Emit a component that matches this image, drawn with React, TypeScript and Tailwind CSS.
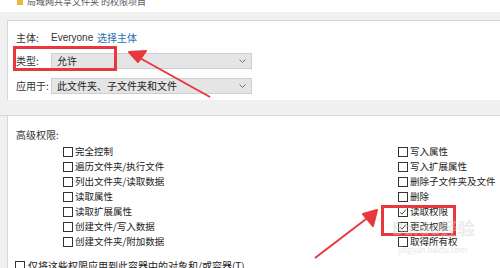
import React from 'react';

const font = { fontFamily: '"Microsoft YaHei", "Noto Sans CJK SC", "Noto Sans", sans-serif' };

const leftPerms = ['完全控制', '遍历文件夹/执行文件', '列出文件夹/读取数据', '读取属性', '读取扩展属性', '创建文件/写入数据', '创建文件夹/附加数据'];
const rightPerms: [string, boolean][] = [
  ['写入属性', false],
  ['写入扩展属性', false],
  ['删除子文件夹及文件', false],
  ['删除', false],
  ['读取权限', true],
  ['更改权限', true],
  ['取得所有权', false],
];

function Box({ checked }: { checked?: boolean }) {
  return (
    <span className="w-[10px] h-[10px] border border-[#333] bg-white flex items-center justify-center shrink-0">
      {checked && (
        <svg width="8" height="8" viewBox="0 0 8 8">
          <path d="M1 4.2 L3 6.2 L7 1.5" stroke="#333" strokeWidth="0.9" fill="none" />
        </svg>
      )}
    </span>
  );
}

function Perm({ label, checked }: { label: string; checked?: boolean }) {
  return (
    <div className="h-[15px] flex items-center gap-[2px]">
      <Box checked={checked} />
      <span className="text-[9.5px] text-[#222] leading-none">{label}</span>
    </div>
  );
}

function Select({ value }: { value: string }) {
  return (
    <div className="w-[201px] h-[16px] bg-[#e5e5e5] border border-[#cfcfcf] flex items-center justify-between px-[5px]">
      <span className="text-[10px] text-[#222] leading-none">{value}</span>
      <svg width="7" height="4" viewBox="0 0 7 4">
        <path d="M0.5 0.5 L3.5 3.5 L6.5 0.5" stroke="#555" strokeWidth="0.8" fill="none" />
      </svg>
    </div>
  );
}

export default function App() {
  return (
    <div className="relative w-[500px] h-[268px] overflow-hidden bg-[#f0f0f0]" style={font}>
      <div className="h-[12px] bg-white flex items-start pl-[17px] gap-[4px] overflow-hidden">
        <span className="w-[6px] h-[6px] bg-[#e8b93a] -mt-[1px]" />
        <span className="text-[9px] leading-none -mt-[3px] text-[#555]">局域网共享文件夹 的权限项目</span>
      </div>
      <div className="h-[8px]" />
      <div className="ml-[7px] h-[80px] bg-white border-t border-l border-[#d6d6d6] flex flex-col">
        <div className="h-[32px] flex items-end pb-[10px] pl-[8px]">
          <span className="w-[35px] text-[10px] text-[#333] leading-none">主体:</span>
          <span className="w-[46px] text-[10px] text-[#333] leading-none" style={{ fontFamily: '"Segoe UI", "Liberation Sans", "Noto Sans CJK SC", sans-serif' }}>Everyone</span>
          <span className="text-[10px] text-[#1f6fb5] leading-none">选择主体</span>
        </div>
        <div className="h-[16px] flex items-center pl-[8px]">
          <span className="w-[35px] text-[10px] text-[#333] leading-none">类型:</span>
          <Select value="允许" />
        </div>
        <div className="h-[9px]" />
        <div className="h-[16px] flex items-center pl-[8px]">
          <span className="w-[35px] text-[10px] text-[#333] leading-none">应用于:</span>
          <Select value="此文件夹、子文件夹和文件" />
        </div>
      </div>
      <div className="h-[16px] border-b border-[#d6d6d6]" />
      <div className="ml-[7px] h-[160px] bg-white border-l border-[#d6d6d6] pl-[8px]">
        <div className="h-[24px] flex items-end">
          <span className="text-[10px] text-[#333] leading-none">高级权限:</span>
        </div>
        <div className="flex mt-[4px]">
          <div className="w-[382px] pl-[47px] flex flex-col">
            {leftPerms.map((p) => (
              <Perm key={p} label={p} />
            ))}
          </div>
          <div className="flex flex-col">
            {rightPerms.map(([p, c]) => (
              <Perm key={p} label={p} checked={c} />
            ))}
          </div>
        </div>
        <div className="mt-[12px] -ml-[1px] flex items-center gap-[3px]">
          <Box />
          <span className="text-[10px] text-[#222] leading-none">仅将这些权限应用到此容器中的对象和/或容器(T)</span>
        </div>
      </div>

      {/* annotations */}
      <div className="absolute left-[13px] top-[46px] w-[104px] h-[25px] border-[3px] border-[#e8383d]" />
      <div className="absolute left-[381px] top-[205px] w-[75px] h-[31px] border-[3px] border-[#e8383d]" />
      <div className="absolute left-[392px] top-[219px] text-[17px] font-bold text-[#d0d0d0] opacity-40 leading-none pointer-events-none">Baidu经验</div>
      <div className="absolute left-[398px] top-[246px] text-[8px] text-[#d0d0d0] opacity-50 leading-none pointer-events-none">jingyan.baidu.com</div>
      <svg className="absolute inset-0 pointer-events-none" width="500" height="268" viewBox="0 0 500 268">
        <path d="M210 97 L138 57" stroke="#e8383d" strokeWidth="2" />
        <path d="M129 52 L146 51 L138 62 Z" fill="#e8383d" stroke="#e8383d" strokeWidth="2" strokeLinejoin="round" />
        <path d="M315 258 L370 216" stroke="#e8383d" strokeWidth="2" />
        <path d="M377 210 L373 226 L363 214 Z" fill="#e8383d" stroke="#e8383d" strokeWidth="2" strokeLinejoin="round" />
      </svg>
    </div>
  );
}
